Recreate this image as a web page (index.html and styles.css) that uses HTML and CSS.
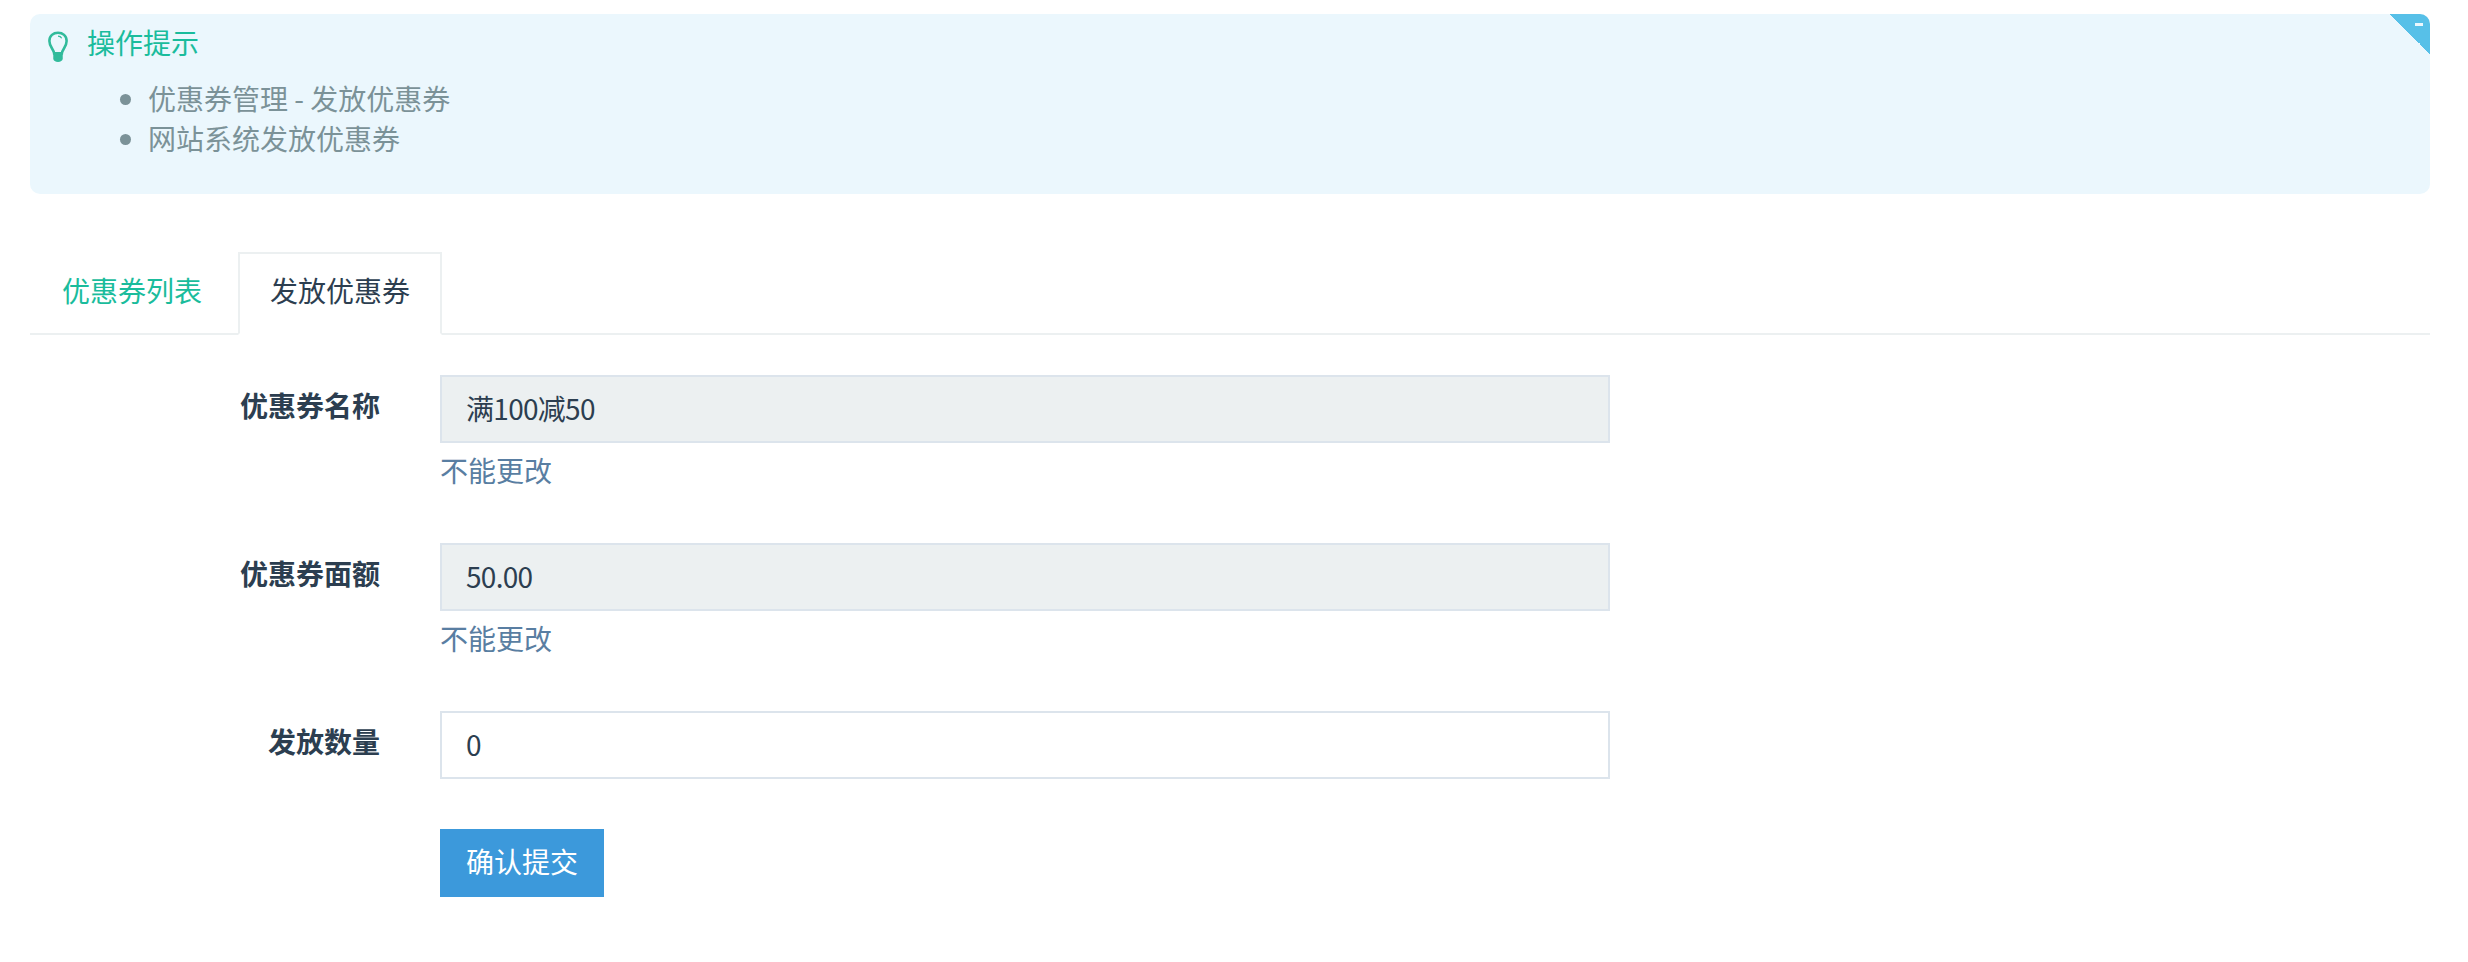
FILE: index.html
```html
<!DOCTYPE html>
<html lang="zh-CN">
<head>
    <meta charset="UTF-8">
    <meta name="viewport" content="width=device-width, initial-scale=1.0">
    <title>发放优惠券</title>
    <link rel="stylesheet" href="styles.css">
</head>
<body>
    <div class="tips">
        <span class="tips-fold"><span class="tips-fold-mark"></span></span>
        <div class="tips-title">
            <svg class="tips-icon" viewBox="0 0 24 36" aria-hidden="true">
                <path d="M7.500 26 C7 21 2 18.500 2 11.500 C2 5.500 6.500 2 12 2 C17.500 2 22 5.500 22 11.500 C22 18.500 17 21 16.500 26 Z" fill="none" stroke="#31bb9b" stroke-width="3"/>
                <path d="M12 6 C14 6 15.500 7 16.300 8.500" fill="none" stroke="#31bb9b" stroke-width="1.400"/>
                <path d="M6.500 25 H17.500 V32 C17.500 34.500 15 36 12 36 C9 36 6.500 34.500 6.500 32 Z" fill="#31bb9b"/>
            </svg>
            <span>操作提示</span>
        </div>
        <ul class="tips-list">
            <li>优惠券管理 - 发放优惠券</li>
            <li>网站系统发放优惠券</li>
        </ul>
    </div>

    <ul class="tabs">
        <li class="tab"><a href="#">优惠券列表</a></li>
        <li class="tab active"><a href="#">发放优惠券</a></li>
    </ul>

    <form class="coupon-form">
        <div class="form-row">
            <label class="form-label">优惠券名称</label>
            <div class="form-field">
                <input class="form-input" type="text" value="满100减50" disabled>
                <p class="form-help">不能更改</p>
            </div>
        </div>
        <div class="form-row">
            <label class="form-label">优惠券面额</label>
            <div class="form-field">
                <input class="form-input" type="text" value="50.00" disabled>
                <p class="form-help">不能更改</p>
            </div>
        </div>
        <div class="form-row">
            <label class="form-label">发放数量</label>
            <div class="form-field">
                <input class="form-input" type="text" value="0">
            </div>
        </div>
        <div class="form-row">
            <div class="form-label"></div>
            <div class="form-field">
                <button class="submit-btn" type="submit">确认提交</button>
            </div>
        </div>
    </form>
</body>
</html>
```

FILE: styles.css
```css
* {
    box-sizing: border-box;
}

body {
    font-family: "Noto Sans CJK SC", sans-serif;
    font-size: 28px;
    line-height: 40px;
    margin: 0;
    padding: 14px 38px 0 30px;
    background: #fff;
    color: #2c3e50;
}

.tips {
    position: relative;
    height: 180px;
    padding: 8px 16px;
    background-color: #ebf7fd;
    border-radius: 10px;
    overflow: hidden;
    margin-bottom: 58px;
}

.tips-fold {
    position: absolute;
    top: 0;
    right: 0;
    width: 40px;
    height: 40px;
    background: linear-gradient(to top right, transparent 50%, #57c0e8 50%);
}

.tips-fold-mark {
    position: absolute;
    top: 9px;
    right: 7px;
    width: 8px;
    height: 3px;
    background: #ebf7fd;
}

.tips-title {
    display: flex;
    align-items: center;
    color: #1abc9c;
}

.tips-icon {
    width: 22px;
    height: 31px;
    margin-right: 18px;
    margin-left: 1px;
    margin-top: 8px;
}

.tips-list {
    margin: 16px 0 0;
    padding: 0 0 0 102px;
    color: #7b9298;
}

.tabs {
    display: flex;
    list-style: none;
    margin: 0;
    padding: 0;
    height: 83px;
    border-bottom: 2px solid #ecf0f1;
}

.tab {
    margin-right: 4px;
}

.tab a {
    display: block;
    height: 83px;
    padding: 16px 30px;
    border: 2px solid transparent;
    color: #1abc9c;
    text-decoration: none;
}

.tab.active a {
    background: #fff;
    border-color: #ecf0f1 #ecf0f1 #fff;
    color: #2c3e50;
}

.coupon-form {
    padding-top: 40px;
}

.form-row {
    display: flex;
    margin-bottom: 50px;
}

.form-label {
    width: 350px;
    padding-top: 10px;
    font-weight: 700;
    text-align: right;
    flex-shrink: 0;
}

.form-field {
    width: 1170px;
    margin-left: 60px;
}

.form-input {
    display: block;
    width: 100%;
    height: 68px;
    padding: 0 24px 3px;
    border: 2px solid #dce4ec;
    border-radius: 0;
    font: inherit;
    letter-spacing: -0.7px;
    color: #2c3e50;
    background: #fff;
    outline: none;
}

.form-input:disabled {
    background: #ecf0f1;
    opacity: 1;
}

.form-help {
    margin: 7px 0 0;
    height: 43px;
    color: #597ea2;
}

.submit-btn {
    display: block;
    height: 68px;
    padding: 0 26px 5px;
    border: none;
    background: #3c99db;
    color: #fff;
    font: inherit;
}
```
